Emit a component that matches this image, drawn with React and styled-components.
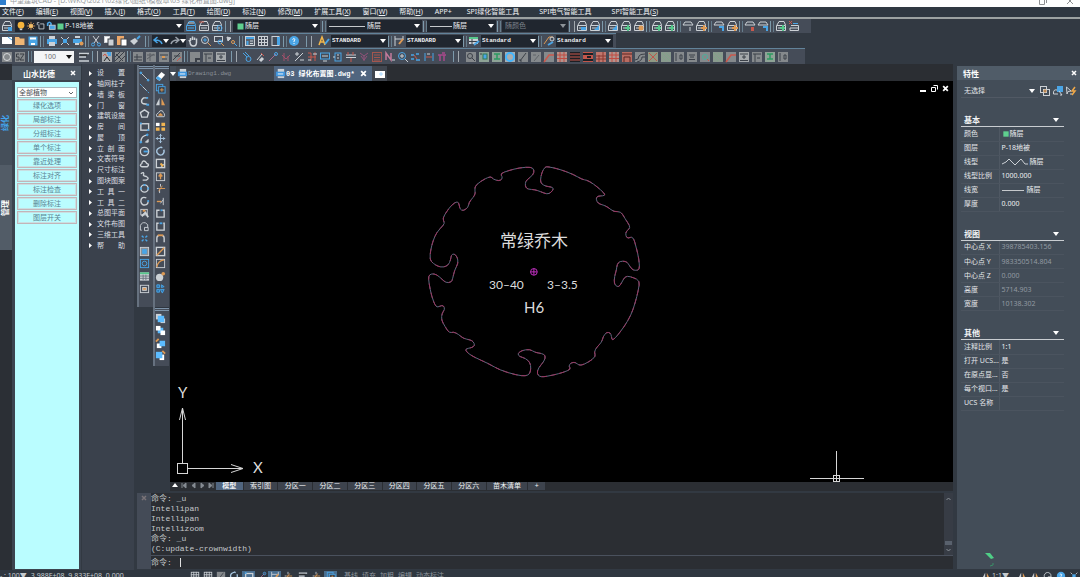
import React from 'react';
import styled, { createGlobalStyle, css } from 'styled-components';

const sans = '"Noto Sans", "Noto Sans CJK SC", sans-serif';
const mono = '"Liberation Mono", "Noto Sans CJK SC", monospace';

const W = '#ccd1d6';
const B = '#4aa5e6';
const O = '#dd9a55';
const G = '#57c78c';
const R = '#c9584c';
const D = '#3b4048';

const Global = createGlobalStyle`
  * { box-sizing: border-box; }
  html, body { margin: 0; background: #323942; }
  body { font-family: ${sans}; font-size: 7px; color: #e3e6e9; overflow: hidden; }
  button, input, select { font: inherit; color: inherit; margin: 0; padding: 0; border: 0; background: none; border-radius: 0; }
  button { cursor: pointer; }
`;

const Shell = styled.div`
  display: flex;
  flex-direction: column;
  height: 100vh;
  background: #323942;
  overflow: hidden;
  white-space: nowrap;
`;

/* ---------- icons ---------- */

const Svg = styled.svg`
  display: block;
  flex: none;
  fill: none;
  stroke: ${W};
  stroke-width: 1;
`;

const layers = (
  <>
    <path d="M2 5 L4 1.5 H9 L10.5 5" />
    <path d="M1.5 5.5 H10.5 V10.5 H1.5 Z M3 8 H9" />
  </>
);

const tile = (inner, fill = '#85898c') => (
  <>
    <rect x="1" y="1" width="10" height="10" fill={fill} stroke="none" />
    <g stroke={D}>{inner}</g>
  </>
);

const icons = {
  layerMgr: <>{layers}<rect x="7" y="7" width="4" height="4" fill={B} stroke="none" /></>,
  layerPrev: <><g stroke={B}>{layers}</g><path d="M3 3 H9" /></>,
  layerState: <>{layers}<path d="M1 2 H6" stroke={R} /></>,
  layerWalk: <>{layers}<circle cx="8.5" cy="8" r="2.5" stroke={B} /></>,
  layerBlue: <>{layers}<path d="M5 7 H10 V10 H5 Z" fill={B} stroke="none" /></>,
  layerPick: <>{layers}<path d="M5 10 L10 5 L10 10 Z" fill={B} stroke="none" /></>,
  layerOrange: <>{layers}<circle cx="8" cy="8" r="2.5" fill={O} stroke="none" /></>,
  layerGreen: <>{layers}<path d="M5 8 H10 M8 5 V11" stroke={G} strokeWidth="2" /></>,
  layerSun: <>{layers}<path d="M9 5 V11 M6 8 H12" stroke={O} strokeWidth="2" /></>,
  layerTop: <path d="M1 5 L3 2 H9 L11 5 Z M8 7 V11" />,
  layerRed: <><path d="M1 5 L3 2 H9 L11 5 Z" /><rect x="7" y="7" width="3" height="4" fill={R} stroke="none" /></>,
  layerCyan: <><path d="M1 5 L3 2 H9 L11 5 Z" /><path d="M6 7 H10 V11" stroke={B} strokeWidth="2" /></>,
  layerCross: <><path d="M3 5.5 H10.5 V10.5 H2 V8 H10" /><path d="M1 1 L4 4 M4 1 L1 4" stroke={R} /><path d="M5 3.5 H10" stroke={B} /></>,
  bulb: <><circle cx="6" cy="5" r="4" fill="#f3b23c" stroke="none" /><path d="M4.5 10 H7.5" strokeWidth="2" /></>,
  sun: <><path d="M6 1 V11 M1 6 H11 M2.5 2.5 L9.5 9.5 M9.5 2.5 L2.5 9.5" stroke={O} /><circle cx="6" cy="6" r="2.5" fill="#f3c06a" stroke="none" /></>,
  freeze: <path d="M3.5 4 V9.5 H9.5 V3.5 H5 M1.5 5 V2 H4" />,
  lock: <><path d="M2 6 V3 Q4 0 6 3 V6" stroke={B} strokeWidth="2" /><rect x="4" y="5" width="7" height="5" stroke={W} fill={B} /></>,
  green: <rect x="2" y="2" width="8" height="8" fill="#5fcf8f" stroke="none" />,
  newDoc: <><rect x="1" y="2" width="10" height="7" fill="#fff" stroke="none" /><path d="M7 2 L11 5" stroke={B} /></>,
  open: <path d="M1 2 H5 L6 3.5 H10.5 V10 H1 Z" fill="#efb675" stroke="none" />,
  save: <><rect x="1.5" y="1.5" width="9" height="9" fill={B} stroke="none" /><path d="M3 3.5 H9 M4 9 H8" stroke="#fff" strokeWidth="2" /></>,
  print: <><rect x="1" y="4" width="10" height="5" fill={B} stroke="none" /><rect x="3" y="1" width="6" height="3" fill={W} stroke="none" /><rect x="3" y="7" width="6" height="4" fill={W} stroke="none" /></>,
  preview: <><path d="M2 2 L4 4 M10 2 L8 4 M2 10 L4 8 M10 10 L8 8" /><rect x="4" y="4" width="4" height="4" fill={B} stroke="none" /></>,
  publish: <><rect x="1" y="4" width="9" height="4" fill={B} stroke="none" /><path d="M3 2 H8 M3 9 H7" strokeWidth="2" /><circle cx="9.5" cy="8.5" r="2" fill={O} stroke="none" /></>,
  cut: <><path d="M3 1 L8 8 M9 1 L4 8" /><circle cx="3" cy="9.5" r="1.5" stroke={B} /><circle cx="9" cy="9.5" r="1.5" stroke={B} /></>,
  copy: <><rect x="1.5" y="1.5" width="5" height="6" fill="#fff" /><rect x="5" y="4" width="6" height="7" fill={W} stroke={D} /></>,
  paste: <><rect x="1" y="1" width="7" height="9" fill="#eda869" stroke="none" /><rect x="5" y="4" width="6" height="7" fill="#fff" stroke={D} /></>,
  brush: <><path d="M1 6 L6 3 L9 6 L5 10 Z" fill={W} stroke="none" /><path d="M8 4 L11 1" stroke={B} strokeWidth="2" /></>,
  undo: <path d="M10 9 Q9 5 3 5 M5.5 2 L2 5 L5.5 8" stroke={B} strokeWidth="1.500" />,
  redo: <path d="M2 9 Q3 5 9 5 M6.5 2 L10 5 L6.5 8" stroke="#9ba2ab" strokeWidth="1.500" />,
  hand: <path d="M3 7 L2 5 M3.5 6 V3 M5.5 5 V1.5 M7.5 5 V2.5 M9.5 6 V3.5 M3 6.5 Q3 11 6.5 11 Q10 11 9.5 6" strokeWidth="1.500" />,
  zoomRt: <><circle cx="5" cy="5" r="3.5" /><path d="M8 8 L11 11" stroke={O} /><path d="M5 3 V7 M3 5 H7" stroke={B} /></>,
  zoomWin: <><rect x="1.5" y="1.5" width="8" height="5" /><circle cx="7" cy="7" r="2" stroke={B} /><path d="M8 8 L11 11" stroke={O} /></>,
  zoomPrev: <><path d="M1 2 L5 3 L2 6 Z" fill={W} /><circle cx="7" cy="7" r="1.5" stroke={O} /><path d="M8 8 L11 11" stroke={B} /></>,
  props: <><rect x="1.5" y="1.5" width="9" height="9" fill="#59636e" /><path d="M2 3 H10 M3.5 6 V10" stroke={B} strokeWidth="2" /><path d="M6 6 H9 M6 8.5 H9" /></>,
  grid: <><rect x="1.5" y="1.5" width="9" height="9" /><path d="M1 4.5 H11 M1 7.5 H11 M4.5 1 V11 M7.5 1 V11" /></>,
  toolPal: <><rect x="2" y="1.5" width="7" height="9" /><rect x="7" y="2" width="3" height="8" fill={B} stroke="none" /></>,
  help: <><circle cx="6" cy="6" r="5" fill={B} stroke="none" /><path d="M4.5 4.5 Q6 2.5 7 4.5 L6 6 V7 M6 8 V9" stroke="#fff" /></>,
  textStyle: <><path d="M1 10 L4 2 L7 10 M2.5 7 H6" stroke="#f3b74a" strokeWidth="1.500" /><path d="M7 9 L11 4" stroke={B} strokeWidth="2" /></>,
  dimStyle: <><path d="M2 1 V11 M2 4 H10 M10 1 V5" /><path d="M6 9 L10 4" stroke={O} strokeWidth="2" /></>,
  tableStyle: <><rect x="1" y="2" width="9" height="7" fill={W} stroke="none" /><path d="M1 3 H10" stroke={G} strokeWidth="2" /><path d="M1 6.5 H10 M4 4 V9" stroke={D} /><path d="M6 10 L11 6" stroke={B} strokeWidth="2" /></>,
  mlStyle: <><path d="M1 9 L6 2 H10" stroke={O} /><circle cx="9" cy="4" r="2" /><path d="M5 10 L10 7" stroke={B} strokeWidth="2" /></>,
  /* draw tools */
  line: <><path d="M2 2 L10 10" /><circle cx="2" cy="2" r="1" fill={B} stroke={B} /><circle cx="10" cy="10" r="1" fill={B} stroke={B} /></>,
  xline: <><path d="M1 1 L11 11" strokeDasharray="3 1" stroke={B} /><path d="M4 4 L8 8" /></>,
  pline: <><path d="M9 2 H5 Q2 4 3 7 Q4 9 9 9" strokeWidth="1.500" /><path d="M8 2 H10 M8 9.5 H11" stroke={B} strokeWidth="2" /></>,
  polygon: <path d="M6 2 L10.5 5 L9 10 H3 L1.5 5 Z" strokeWidth="1.500" />,
  rect: <><rect x="2" y="3" width="8.5" height="7" strokeWidth="1.500" /><path d="M1 2.5 H3 M9 10 H11" stroke={B} strokeWidth="2" /></>,
  arc: <><path d="M2 10 Q2 3 9 2" strokeWidth="1.500" /><circle cx="2" cy="10" r="1" fill={B} stroke={B} /><circle cx="9" cy="2" r="1" fill={B} stroke={B} /><path d="M10 7 V10 H7 Z" fill={W} /></>,
  circle: <><circle cx="6" cy="6" r="4.5" strokeWidth="1.500" /><path d="M5 6 H10" stroke={B} strokeWidth="2" /></>,
  cloud: <path d="M3 9.5 Q0 8 3 6 Q4 2 7 4 Q8 5 8.5 6 Q12 7 9 9.5 Z" strokeWidth="1.500" />,
  spline: <path d="M2 3 Q6 0 5 4 Q4 5 8 6 Q12 8 8 10 H4" strokeWidth="1.500" />,
  ellipse: <><circle cx="6" cy="6" r="4" strokeWidth="1.500" /><path d="M1 6 H3 M9 6 H11 M5 2 H7" stroke={B} strokeWidth="2" /></>,
  ellArc: <><path d="M8 2 Q2 0 2 6 Q3 11 8 9.5 Q10 8 10 6" strokeWidth="1.500" /><path d="M9 5.5 H11" stroke={B} strokeWidth="2" /></>,
  insert: <><rect x="2" y="1.5" width="7" height="6" /><path d="M3 9 L7 5 L10 10" stroke={W} strokeWidth="2" /><path d="M4 3 H7" stroke={O} strokeWidth="2" /></>,
  block: <path d="M3 10 H1.5 V5 Q3 1 7 2 L9.5 4 V7 M6 7 H10 V10.5 H6 Z" />,
  point: <path d="M3 3 L5 5 M9 3 L7 5 M3 9 L5 7 M9 9 L7 7" stroke={B} strokeWidth="1.500" />,
  hatch: <><rect x="1.5" y="1.5" width="9" height="9" fill="#8a9198" /><rect x="4" y="4" width="4" height="4" fill={B} stroke={B} /></>,
  region: <><rect x="1.5" y="1.5" width="9" height="9" stroke={B} /><circle cx="6" cy="6" r="2.5" stroke={B} /></>,
  table: <><rect x="1" y="1.5" width="10" height="9" fill={W} stroke="none" /><path d="M1 2.5 H11" stroke={G} strokeWidth="2" /><path d="M1 5.5 H11 M1 8 H11 M4.5 4 V10 M7.5 4 V10" stroke="#6b7580" /></>,
  image: <><rect x="1.5" y="2.5" width="9" height="8" /><rect x="4" y="5" width="4" height="3" fill={O} stroke={W} /></>,
  /* modify tools */
  erase: <><path d="M1 8 L7 1 L11 4 L5 11 Z" fill="#fff" stroke="none" /><path d="M1 8 L3 5.5 L7 8.5 L5 11 Z" fill={B} stroke="none" /></>,
  dup: <><rect x="1.5" y="1.5" width="7" height="7" stroke={B} /><rect x="4" y="4" width="7" height="7" stroke={B} fill={D} /><path d="M7.5 5.5 V9.500 M5.5 7.5 H9.500" stroke={O} /></>,
  mirror: <><path d="M5 2 V10 H1 Z" fill={W} stroke="none" /><path d="M7 2 V10 H11 Z" fill={O} stroke="none" /></>,
  offset: <><path d="M2 9.5 Q0 7 4 5 Q5 2 8 3 Q9 5 10 6 Q11 8 10 9.5 Z" /><path d="M4 8 Q6 4 8 8 Z" stroke={O} fill={O} /></>,
  array: <><rect x="1" y="2" width="4" height="3.5" fill="#fff" stroke="none" /><path d="M7 2 H11 V5.5 H7 Z M1 7 H5 V10.5 H1 Z M7 7 H11 V10.5 H7 Z" fill="#f0b452" stroke="none" /></>,
  move: <path d="M6 1 V11 M1 6 H11 M4.5 3 L6 1.5 L7.5 3 M4.5 9 L6 10.5 L7.5 9 M3 4.5 L1.5 6 L3 7.5 M9 4.5 L10.5 6 L9 7.5" stroke="#a9c8e2" />,
  rotate: <path d="M6 1.5 Q1 3 2 7 Q4 11 8 9.5 Q11 7 9.5 4 M6 1 L8 2" stroke="#a9c8e2" strokeWidth="1.500" />,
  scale: <><rect x="1.5" y="1.5" width="9" height="9" strokeWidth="1.500" /><path d="M10 7 H7 V10" /><path d="M6 6 L9 9" stroke="#f0b452" strokeWidth="2" /></>,
  stretch: <><rect x="1.5" y="2" width="9" height="8.5" /><path d="M6 9 V4 M4 6 L6 3.5 L8 6" stroke={O} strokeWidth="1.500" /></>,
  trim: <><path d="M6 1 V4 M5 11 V7 M2 6 H4" /><path d="M4 6 H11 M4 9 L8 3" stroke={O} /></>,
  extend: <><path d="M2 6 H7" stroke={O} strokeWidth="1.500" /><path d="M9 2 V10 M6 8 L9 4" /></>,
  breakPt: <><path d="M5 2.5 H2 V10 H10 V2.5 H8" strokeWidth="1.500" /><path d="M6 2.5 H8" stroke={B} strokeWidth="2" /></>,
  brk: <><path d="M4 2.5 H2 V10 H10 V2.5 H9" strokeWidth="1.500" /><path d="M5 2.5 H8" stroke={B} strokeWidth="2" /></>,
  join: <><path d="M2 10 V6 Q2 3 4 3 M10 10 V6 Q10 3 8 3" strokeWidth="1.500" /><path d="M3 2.5 H9" stroke={O} strokeWidth="2" /></>,
  chamfer: <><rect x="1.5" y="1.5" width="9" height="9" strokeWidth="1.500" /><path d="M2 10 L10 2" stroke={O} strokeWidth="1.500" /></>,
  fillet: <><rect x="1.5" y="1.5" width="9" height="9" /><path d="M2 10 Q3 3 10 2" stroke={O} strokeWidth="1.500" /></>,
  explode: <><circle cx="5" cy="7" r="4" fill={W} stroke="none" /><circle cx="9" cy="3" r="2" fill={O} stroke="none" /></>,
  group: <path d="M2 2 H5 V5 H2 Z M7 2 L10 4 L7 5 Z M2 7 H5 V10 H2 Z M6 7 H10 L8 11 Z" stroke={B} fill="#2b72ad" />,
  front: <><rect x="1" y="1" width="6" height="6" fill={W} stroke="none" /><rect x="6" y="6" width="5" height="5" fill={W} stroke="none" /><rect x="3" y="3" width="7" height="7" fill="#5cbcff" stroke="none" /></>,
  back: <><rect x="3" y="3" width="6" height="6" fill="#5cbcff" stroke="none" /><rect x="1" y="1" width="5" height="5" fill="#fff" stroke="none" /><rect x="6" y="6" width="5" height="5" fill="#fff" stroke="none" /></>,
  above: <><rect x="2" y="6" width="5" height="5" fill="#fff" stroke="none" /><rect x="5" y="3" width="6" height="6" fill="#5cbcff" stroke="none" /><path d="M1 4 L4 1" stroke={O} strokeWidth="2" /></>,
  under: <><rect x="5" y="5" width="5" height="6" fill="#fff" stroke="none" /><rect x="1" y="2" width="7" height="7" fill="#5cbcff" stroke="none" /><path d="M8 1 L11 4" stroke={O} strokeWidth="2" /></>,
  /* properties panel */
  pickAdd: <><rect x="1.5" y="1.5" width="6" height="6" /><rect x="4.5" y="4.5" width="6" height="6" /><path d="M6 4 V8 M4 6 H8" stroke={O} /></>,
  pickObj: <><rect x="5" y="1" width="6" height="6" fill={B} stroke="none" /><path d="M5 5 Q1 4 1.5 9 H6 M7 6 L10 10 L8 10" /></>,
  quick: <><path d="M1.5 2 L6 6 L3 6.5 L2 9 Z M5 9 H7" /><path d="M10 2 L7 6 H10 L7 10" stroke="#f0a848" strokeWidth="1.500" /></>,
  dwg: <><rect x="3" y="1" width="7" height="4" fill={W} stroke="none" /><rect x="1" y="4" width="10" height="5" fill="#3f95dd" stroke="none" /><path d="M3 6.5 H9" stroke="#fff" /><path d="M3 10 H10" strokeWidth="2" /></>,
  newTab: <><rect x="1" y="3" width="10" height="7" fill="#fff" stroke="none" /><path d="M7 4 V8 M5 6 H9" stroke="#a8d8ff" /></>,
  /* small coloured CAD tools */
  c0: <><path d="M2 2 L6 6 M4 1 L8 5" stroke={B} /><circle cx="7.5" cy="8" r="2.5" stroke={B} /></>,
  c1: <><path d="M3 9 L8 3" /><path d="M7 2 L10 5" stroke={R} /><path d="M6 10 L9 7" strokeWidth="3" /></>,
  c2: <><path d="M2 10 L9 3" stroke="#a86a8b" /><circle cx="9" cy="3" r="1.5" stroke={B} /></>,
  c3: <path d="M2 4 L6 8 L10 4 M4 2 V10 M8 5 V10" stroke="#a0506a" />,
  c4: <><path d="M2 3 H6 M4 1 V5 M7 9 H11" /><path d="M2 10 L10 2" /></>,
  c5: <><path d="M2 2 H5 V10 M9 1 V10 M2 6 H10" stroke={R} /><path d="M7 3 H11 M2 9 H5" /></>,
  c6: <><rect x="1.5" y="2" width="9" height="6" stroke={B} /><path d="M3 5 H9 M4 10 H8" /></>,
  c7: <><rect x="3" y="2" width="6" height="8" stroke={B} /><path d="M5 4 H7 M5 7 H7 M1 6 H3" /></>,
  c8: <><path d="M1 4 H11 M1 6.5 H11" /><path d="M3 1 V4 M8 1 V4 M6 7 V11" stroke={R} /></>,
  c9: <path d="M2 2 L6 5 L10 2 M3 5 L6 9 L9 5 M6 5 V10" stroke="#94527a" />,
  c10: <><rect x="1.5" y="1.5" width="9" height="9" stroke="#a3564e" /><path d="M3 4 H9 M3 6.5 H9 M3 9 H9" stroke="#a3564e" /></>,
  c11: <><path d="M2 9 V2 L7 9 V2" stroke="#c27a9a" strokeWidth="1.500" /><path d="M8 9 H11" /></>,
  c12: <><circle cx="5" cy="5" r="3.5" stroke={B} /><path d="M5 3 V7 M3 5 H7 M8 8 L11 11" /></>,
  c13: <><path d="M1 4 H4 M6 3 H9 M1 8 H4 M6 9 H10" stroke={B} strokeWidth="1.500" /><path d="M4 4 L7 8" stroke={R} /></>,
  c14: <><path d="M2 2 V10 M10 2 V10" stroke={B} /><path d="M3 6 H9" stroke={R} /><path d="M4 3 H7" /></>,
  c15: <path d="M2 4 H10 M4 4 V10 M8 4 V10 M6 2 H9" stroke="#a84a8c" strokeWidth="1.500" />,
  /* grey tiles */
  t0: tile(<circle cx="6" cy="6" r="3.5" stroke="#d8dadc" />),
  t1: tile(<path d="M5 3 H2.5 V6 H5 V9 H2 M6 3 H10 L6 9 H10" stroke="#3a3f45" />),
  t2: <><path d="M1 2.5 H11 M1 6 H8 M1 10 H11" strokeWidth="1.500" /><path d="M2 4 H9" stroke="#222" /></>,
  t3: tile(<><path d="M6 2 H10 M7 4 H10" stroke={B} strokeWidth="2" /><path d="M2 5 L4 3 L6 6" stroke={R} /><path d="M3 10 L6 6 L9 10" stroke="#222" /></>, '#a9adb0'),
  t4: tile(<path d="M1 6 L6 1 M1 10 L10 1 M5 11 L11 5 M2 3 L9 10" />),
  t5: tile(<path d="M2 6 H10 M5 3 V9 M2 9 H10" />),
  t6: tile(<path d="M2 8 L9 3 M2 4 H10 M5 2 V10" stroke="#5a5f64" />),
  t7: tile(<><path d="M2 4 H10 M4 8 H9" /><path d="M4 6 H7" stroke={O} strokeWidth="2" /></>),
  t8: tile(<><path d="M2 9 L9 2 M3 5 H9" /><path d="M6 10 L10 6" stroke={R} /></>),
  t9: tile(<path d="M7 11 V8 H11" strokeWidth="2" />),
  t10: tile(<path d="M2 3 H10 M4 3 V11 M6 7 H9" />),
  t11: tile(<path d="M2 3 H10 M6 4 V8 M2 9.5 H10 M4 6 H8" />, '#a5a9ac'),
  u0: tile(<><circle cx="5" cy="5" r="2.5" /><path d="M7 7 L10 10" /></>),
  u1: tile(<><rect x="5" y="3" width="4" height="5" fill={B} stroke="#2d7a54" /><path d="M2 3 H4" /></>, '#8ea396'),
  u2: tile(<path d="M3 3 H9 M6 3 V8 M3 8 H9" stroke="#2c9a62" strokeWidth="1.500" />, '#8ea396'),
  u3: tile(<circle cx="6" cy="6" r="4" stroke="#43b6ff" strokeWidth="2" />, '#a9adb0'),
  u4: tile(<path d="M3 10 L9 2 M3 8 V10 H5" />),
  u5: tile(<path d="M4 10 L9 4 M3 4 H6" stroke="#60656a" />),
  u6: tile(<path d="M1 11 L6 4 H11" stroke={R} strokeWidth="1.500" />),
  u7: tile(<path d="M1 4 H11 M1 7.5 H11 M4 1 V11 M8 1 V11" stroke="#c14c43" />, '#b3938d'),
  u8: tile(<path d="M1 3 H11 M1 6 H11 M1 9 H11" stroke={R} />, '#1d1f24'),
  u9: tile(<path d="M1 3 H11 M5 6 H9 M1 9 H11" stroke="#1d1f24" strokeWidth="2" />, '#c1564c'),
  u10: tile(<path d="M1 5 H11 M4 4 V11 M8 1 V11 M1 8 H11" stroke="#8a3831" />, '#c0766d'),
  u11: tile(<path d="M3 11 V6 H9 V11 M1 3 H11" stroke="#5a2622" />, '#b96c62'),
  u12: tile(<path d="M1 9 Q5 9 5 5 Q6 3 11 3 M3 11 Q8 10 8 6 H11" />),
  u13: tile(<path d="M2 2 L10 10 M10 2 L2 10" stroke="#c0564b" />, '#8f9a84'),
  u14: tile(<path d="M2 2 L10 10 M2 6 L6 10 M6 2 L10 6" stroke="#7fa388" />, '#8a9a8e'),
  u15: tile(<path d="M3 2 V10 M7 4 H9 V8 H7 Z" />),
  u16: tile(<path d="M3 4 H9 M4 6 H8 M3 8.5 H9" />),
  u17: tile(<><circle cx="6" cy="6" r="2.5" stroke="#4cae9c" /><path d="M8 8 L10 10" stroke={R} /></>),
};

const Icon = ({ name, size = 12 }) => (
  <Svg width={size} height={size} viewBox="0 0 12 12" aria-hidden="true">{icons[name]}</Svg>
);

const Caret = ({ color = '#fff' }) => (
  <Svg width="6" height="4" viewBox="0 0 6 4" aria-hidden="true">
    <path d="M0 0 H6 L3 4 Z" fill={color} stroke="none" />
  </Svg>
);

/* ---------- title and menu ---------- */

const TitleBar = styled.header`
  display: flex;
  justify-content: space-between;
  align-items: flex-end;
  height: 7px;
  flex: none;
  background: #fdfefe;
  color: #9a9d9f;
  padding: 0 5px 2px 0;
  overflow: hidden;
`;
const TitleText = styled.div`
  display: flex;
  align-items: flex-end;
  gap: 4px;
  line-height: 9px;
`;
const AppMark = styled.span`
  width: 6px;
  height: 7px;
  background: #2f7fce;
`;
const WinButtons = styled.div`
  display: flex;
  gap: 18px;
`;
const WinButton = styled.button`
  width: 9px;
  height: 8px;
`;
const MenuBar = styled.nav`
  display: flex;
  gap: 12px;
  height: 12px;
  flex: none;
  padding-left: 2px;
  background: #2e3741;
  border-bottom: 2px solid #9ba1a2;
`;
const PluginMenus = styled.div`
  display: flex;
  gap: 20px;
  padding-left: 3px;
`;
const MenuItem = styled.button`
  color: #eef1f3;
  text-align: left;
  line-height: 10px;
  u { text-underline-offset: 1px; }
`;

const menus = [
  ['文件', 'F'], ['编辑', 'E'], ['视图', 'V'], ['插入', 'I'], ['格式', 'O'], ['工具', 'T'], ['绘图', 'D'],
  ['标注', 'N'], ['修改', 'M'], ['扩展工具', 'X'], ['窗口', 'W'], ['帮助', 'H'], ['APP+'],
];
const pluginMenus = [['SPI绿化智能工具'], ['SPI电气智能工具'], ['SPI智能工具', 'S']];

const MenuItems = ({ items }) => items.map(([text, key]) => (
  <MenuItem key={text} type="button">{text}{key && <>(<u>{key}</u>)</>}</MenuItem>
));

/* ---------- toolbars ---------- */

const BarRow = styled.div`
  display: flex;
  flex: none;
`;
const Bar = styled.div`
  display: flex;
  align-items: center;
  height: ${(p) => p.$h}px;
  padding-right: ${(p) => p.$end}px;
  background: #454c58;
  border-top: ${(p) => (p.$line ? '1px solid #62839a' : '0')};
`;
const ToolButton = styled.button`
  display: flex;
  justify-content: center;
  align-items: center;
  width: 13px;
  height: 13px;
  flex: none;
`;
const Grip = styled.span`
  display: flex;
  justify-content: center;
  width: ${(p) => p.$w}px;
  height: 11px;
  flex: none;
  &::before {
    content: '';
    width: ${(p) => (p.$double ? 4 : 2)}px;
    border-left: 1px solid #7d9aab;
    border-right: 1px solid ${(p) => (p.$double ? '#a2a8ae' : '#667d8c')};
  }
`;
const Combo = styled.label`
  display: flex;
  align-items: center;
  width: ${(p) => p.$w}px;
  height: 12px;
  flex: none;
  padding: 0 2px 0 ${(p) => p.$pad || 1}px;
  margin-left: ${(p) => p.$ml || 0}px;
  margin-right: ${(p) => p.$mr || 0}px;
  background: ${(p) => (p.$light ? '#f4f5f6' : '#20262f')};
  color: ${(p) => (p.$light ? '#6c7074' : p.$dim ? '#7c828a' : '#eef0f2')};
  ${(p) => p.$mono && css`font-family: ${mono}; font-size: 6px; font-weight: bold;`}
`;
const Select = styled.select`
  appearance: none;
  flex: 1;
  min-width: 0;
  outline: 0;
  line-height: 10px;
  padding-left: ${(p) => p.$pad || 0}px;
`;
const LineSample = styled.span`
  width: ${(p) => p.$w}px;
  height: 1px;
  background: #c6c9cc;
  flex: none;
`;
const UndoGroup = styled.div`
  display: flex;
  align-items: center;
  width: 34px;
  height: 12px;
  background: #20262f;
  button { width: 11px; }
`;

const Tools = ({ names }) => names.map((n, i) => (
  <ToolButton key={i} type="button" aria-label={n}><Icon name={n} /></ToolButton>
));

const Drop = ({ value, caret, label, children, selPad, ...rest }) => (
  <Combo {...rest}>
    {children}
    <Select aria-label={label} defaultValue={value} $pad={selPad}><option>{value}</option></Select>
    <Caret color={caret} />
  </Combo>
);

const LayerRow = () => (
  <BarRow>
    <Bar $h={14} $end={11}>
      <Tools names={['layerMgr']} />
      <Drop $w={169} $ml={2} $pad={1} value="P-18地被" label="图层">
        <Icon name="bulb" size={10} /><Icon name="sun" size={10} /><Icon name="freeze" size={10} />
        <Icon name="lock" size={10} /><Icon name="green" size={9} />
      </Drop>
      <Tools names={['layerPrev', 'layerState', 'layerWalk']} />
      <Grip $w={10} $double />
      <Drop $w={87} $pad={3} value="随层" label="颜色"><Icon name="green" size={9} /></Drop>
      <Grip $w={7} />
      <Drop $w={95} $pad={2} selPad={2} value="随层" label="线型"><LineSample $w={36} /></Drop>
      <Grip $w={5} />
      <Drop $w={69} $pad={3} selPad={1} value="随层" label="线宽"><LineSample $w={22} /></Drop>
      <Grip $w={6} />
      <Drop $w={66} $pad={3} $dim caret="#8d9399" value="随颜色" label="打印样式" />
      <Grip $w={7} $double />
      <Tools names={['layerBlue', 'layerPick']} />
      <Grip $w={5} />
      <Tools names={['layerPick', 'layerGreen', 'layerOrange']} />
      <Grip $w={5} />
      <Tools names={['layerGreen', 'layerGreen']} />
      <Grip $w={5} />
      <Tools names={['layerTop', 'layerSun']} />
      <Grip $w={5} />
      <Tools names={['layerCyan', 'layerSun']} />
      <Grip $w={5} />
      <Tools names={['layerRed', 'layerCyan']} />
      <Grip $w={5} />
      <Tools names={['layerGreen', 'layerCross']} />
    </Bar>
  </BarRow>
);

const StandardRow = () => (
  <BarRow>
    <Bar $h={15} $end={3} $line>
      <Tools names={['newDoc', 'open', 'save']} />
      <Grip $w={6} />
      <Tools names={['print', 'preview', 'publish']} />
      <Grip $w={5} />
      <Tools names={['cut', 'copy', 'paste', 'brush']} />
      <Grip $w={11} />
      <UndoGroup>
        <Tools names={['undo']} /><Caret /><Tools names={['redo']} /><Caret />
      </UndoGroup>
      <Tools names={['hand', 'zoomRt', 'zoomWin', 'zoomPrev']} />
      <Grip $w={5} />
      <Tools names={['props', 'grid', 'toolPal']} />
      <Grip $w={5} />
      <Tools names={['help']} />
      <Grip $w={17} $double />
      <Tools names={['textStyle']} />
      <Drop $w={57} $ml={1} $mono value="STANDARD" label="文字样式" />
      <Grip $w={4} />
      <Tools names={['dimStyle']} />
      <Drop $w={57} $ml={1} $mono value="STANDARD" label="标注样式" />
      <Grip $w={4} />
      <Tools names={['tableStyle']} />
      <Drop $w={57} $ml={1} $mono value="Standard" label="表格样式" />
      <Grip $w={4} />
      <Tools names={['mlStyle']} />
      <Drop $w={57} $ml={1} $mono value="Standard" label="引线样式" />
    </Bar>
  </BarRow>
);

const archTools = Array.from({ length: 16 }, (_, i) => `c${i}`);
const planTools = ['u0', 'u1', 'u2', 'u3', 'u4', 'u5', 'u6', 'u7', 'u8', 'u9', 'u10', 'u7', 'u11', 'u12', 'u13',
  'u14', 'u15', 'u16', 'u17', 'u14', 'u6', 't11', 't10', 'u2', 'u15'];

const PluginRow = () => (
  <BarRow>
    <Bar $h={16} $end={16} $line>
      <Tools names={['t0', 't1']} />
      <Grip $w={8} />
      <Drop $w={40} $mr={3} $light caret="#111" selPad={9} value="100" label="比例" />
      <Tools names={['t2']} />
      <Grip $w={10} $double />
      <Tools names={['t3', 't4']} />
      <Grip $w={5} />
      <Tools names={['t5', 't6', 't7', 't8']} />
      <Grip $w={5} />
      <Tools names={['t9', 't10', 't11']} />
      <Grip $w={13} $double />
      <Tools names={archTools} />
      <Grip $w={16} $double />
      <Tools names={planTools} />
    </Bar>
  </BarRow>
);

/* ---------- left side ---------- */

const Workspace = styled.main`
  display: flex;
  flex: 1;
  min-height: 0;
`;
const Rail = styled.nav`
  display: flex;
  flex-direction: column;
  width: 12px;
  flex: none;
  padding-top: 16px;
  background: #2b2f35;
`;
const RailTab = styled.button`
  display: flex;
  align-items: center;
  justify-content: center;
  height: 85px;
  width: 12px;
  padding-right: 2px;
  background: ${(p) => (p.$active ? '#525c67' : '#454f5a')};
  color: ${(p) => (p.$active ? '#fff' : '#42a4ee')};
  font-size: 8px;
  font-weight: bold;
  span {
    writing-mode: vertical-rl;
    text-orientation: sideways;
    rotate: 180deg;
    line-height: 10px;
  }
`;
const Palette = styled.section`
  display: flex;
  flex-direction: column;
  width: 69px;
  flex: none;
  padding: 2px 0 1px;
  margin-right: 1px;
  background: #3c444f;
`;
const PanelHead = styled.div`
  display: flex;
  align-items: center;
  justify-content: space-between;
  height: 14px;
  flex: none;
  padding: 0 ${(p) => p.$right}px 0 ${(p) => p.$left}px;
  background: #505c68;
  color: #fff;
  font-size: 8px;
  font-weight: bold;
`;
const CloseButton = styled.button`
  display: flex;
  align-items: center;
  justify-content: center;
  width: 8px;
  height: 8px;
`;
const Cross = ({ color = '#fff', size = 6 }) => (
  <Svg width={size} height={size} viewBox="0 0 6 6" aria-hidden="true">
    <path d="M1 1 L5 5 M5 1 L1 5" stroke={color} strokeWidth="1.500" />
  </Svg>
);
const PlantList = styled.div`
  display: flex;
  flex-direction: column;
  gap: 1px;
  flex: 1;
  margin: 2px 2px 0 3px;
  padding: 5px 2px 0;
  background: #bafdff;
  color: #5a8292;
`;
const PlantSelect = styled.label`
  display: flex;
  align-items: center;
  height: 11px;
  padding: 0 2px 0 1px;
  background: #fff;
  border: 1px solid #a9b9be;
  color: #4a4f53;
`;
const PlantButton = styled.button`
  height: 13px;
  line-height: 9px;
  border: 1px solid #c2b5b9;
  outline: 1px solid #c9dfe2;
  outline-offset: -2px;
  background: #bafdff;
`;
const TreePane = styled.aside`
  width: 52px;
  flex: none;
  padding-top: 4px;
  margin-right: 3px;
  background: #3a414c;
`;
const Tree = styled.ul`
  display: grid;
  grid-auto-rows: 1fr;
  height: 183px;
  list-style: none;
  margin: 0;
  padding: 0;
`;
const TreeItem = styled.button`
  display: flex;
  align-items: center;
  gap: 5px;
  height: 100%;
  padding-left: 7px;
  line-height: 10px;
  color: #dcdfe2;
  span {
    width: 28px;
    text-align: justify;
    text-align-last: justify;
  }
`;

const plants = ['绿化选项', '局部标注', '分组标注', '单个标注', '靠近处理', '标注对齐', '标注检查', '删除标注', '图层开关'];
const treeItems = ['设 置', '轴网柱子', '墙 梁 板', '门 窗', '建筑设施', '房 间', '屋 顶', '立 剖 面', '文表符号',
  '尺寸标注', '图块图案', '工 具 一', '工 具 二', '总图平面', '文件布图', '三维工具', '帮 助'];

/* ---------- centre ---------- */

const Center = styled.div`
  display: flex;
  flex-direction: column;
  flex: 1;
  min-width: 0;
`;
const Upper = styled.div`
  display: flex;
  flex: 1;
  min-height: 0;
`;
const ToolColumn = styled.div`
  width: 16px;
  padding-top: 1px;
  flex: none;
`;
const ToolStrip = styled.div`
  display: grid;
  grid-auto-rows: 1fr;
  justify-items: start;
  height: ${(p) => p.$h}px;
  padding: 5px 0 ${(p) => p.$bottom}px;
  background: #454c58;
  border-left: 2px solid #66717f;
  box-shadow: inset 0 1px #2f3640, inset 0 2px #7d93a8, inset 0 3px #454c58, inset 0 4px #7d93a8;
`;
const StripButton = styled.button`
  display: flex;
  align-items: center;
  justify-content: center;
  width: 11px;
`;
const Drawing = styled.div`
  display: flex;
  flex-direction: column;
  flex: 1;
  min-width: 0;
  margin-left: 1px;
`;
const FileTabs = styled.div`
  display: flex;
  height: 17px;
  flex: none;
  padding-top: 2px;
  background: #2b2e33;
`;
const TabMenu = styled.button`
  display: flex;
  align-items: center;
  justify-content: center;
  width: 6px;
  background: #454d58;
`;
const FileTab = styled.button`
  display: flex;
  align-items: center;
  width: 98px;
  padding-left: 1px;
  font-family: ${mono};
  font-size: ${(p) => (p.$active ? 7 : 6)}px;
  font-weight: ${(p) => (p.$active ? 'bold' : 'normal')};
  background: ${(p) => (p.$active ? '#50657f' : '#40464f')};
  color: ${(p) => (p.$active ? '#fff' : '#8a9098')};
`;
const TabName = styled.span`
  flex: 1;
  text-align: left;
  line-height: 10px;
`;
const TabClose = styled.span`
  display: flex;
  padding-right: 5px;
`;
const NewTab = styled.button`
  display: flex;
  align-items: center;
  justify-content: center;
  width: 15px;
  background: #40464f;
`;
const Canvas = styled.div`
  position: relative;
  flex: 1;
  min-height: 0;
  background: #000;
  overflow: hidden;
`;
const DocButtons = styled.div`
  position: absolute;
  top: 3px;
  right: 4px;
  display: flex;
  gap: 3px;
`;
const Sketch = styled.svg`
  display: block;
  width: 100%;
  height: 100%;
  fill: none;
  stroke: #d6d6d6;
  text {
    fill: #dcdcdc;
    stroke: none;
    font-family: Lato, "Noto Sans CJK SC", sans-serif;
  }
`;

const crown = [
  [335, 36], [343, 45], [340, 60], [320, 75], [316, 85], [317, 97], [325, 103], [345, 104], [362, 110], [382, 118],
  [393, 113], [402, 101], [395, 96], [378, 94], [365, 87], [361, 76], [366, 52], [375, 36], [385, 35], [420, 43],
  [460, 58], [488, 74], [500, 75], [520, 86], [543, 105], [557, 119], [550, 123], [533, 123], [528, 132], [535, 146],
  [550, 150], [565, 157], [582, 171], [603, 169], [615, 190], [631, 214], [628, 222], [618, 231], [618, 243],
  [624, 251], [640, 244], [650, 280], [657, 310], [660, 344], [648, 347], [636, 344], [625, 325], [617, 319],
  [600, 319], [592, 328], [590, 345], [584, 365], [583, 387], [592, 396], [601, 393], [612, 370], [622, 363],
  [640, 368], [660, 377], [656, 405], [646, 445], [634, 480], [612, 518], [578, 560], [575, 545], [572, 534],
  [560, 532], [550, 545], [546, 562], [530, 578], [523, 592], [528, 605], [508, 621], [480, 634], [467, 622],
  [453, 624], [446, 634], [454, 643], [430, 653], [400, 661], [362, 668], [351, 657], [355, 640], [374, 618],
  [377, 602], [366, 596], [345, 593], [330, 583], [305, 587], [293, 597], [298, 605], [318, 611], [331, 624],
  [333, 640], [330, 657], [318, 664], [290, 661], [240, 646], [205, 626], [160, 606], [140, 592], [136, 582],
  [155, 579], [165, 572], [160, 560], [150, 555], [130, 551], [115, 538], [100, 531], [88, 535], [75, 515],
  [64, 495], [66, 475], [75, 463], [70, 451], [60, 454], [48, 458], [35, 425], [27, 385], [25, 363], [35, 356],
  [50, 359], [65, 372], [78, 384], [94, 382], [98, 372], [104, 345], [115, 325], [112, 306], [102, 296], [94, 300],
  [92, 315], [85, 331], [70, 337], [55, 335], [40, 326], [29, 314], [32, 285], [39, 258], [50, 232], [72, 209],
  [73, 202], [68, 190], [80, 170], [95, 150], [113, 138], [118, 150], [120, 163], [130, 168], [145, 157],
  [147, 142], [160, 127], [167, 115], [163, 96], [180, 80], [212, 63], [220, 73], [237, 78], [246, 73], [247, 65],
  [241, 56], [265, 47], [300, 38],
];
const smooth = (pts) => {
  const mid = (a, b) => [(a[0] + b[0]) / 2, (a[1] + b[1]) / 2];
  const start = mid(pts[pts.length - 1], pts[0]);
  return `M${start.join(' ')} ` + pts.map((p, i) => {
    const m = mid(p, pts[(i + 1) % pts.length]);
    return `Q${p.join(' ')} ${m.join(' ')}`;
  }).join(' ') + ' Z';
};
const crownPath = smooth(crown);

const Plan = () => (
  <Sketch>
    <g transform="translate(250 74) scale(0.333)" strokeWidth="3">
      <path d={crownPath} stroke="#5d6880" />
      <path d={crownPath} stroke="#9c355f" strokeDasharray="17 10" />
      <g stroke="#c02fc0">
        <circle cx="342" cy="351" r="10" />
        <path d="M342 341 V361 M332 351 H352" />
      </g>
    </g>
    <text x="330" y="166" fontSize="17">常绿乔木</text>
    <text x="319" y="208" fontSize="12">30–40</text>
    <text x="377" y="208" fontSize="12">3–3.5</text>
    <text x="354" y="232" fontSize="15">H6</text>
    <g>
      <path d="M12.5 382 V327 M9.5 339 L12.5 327 L15.5 339 M18 387.5 H73 M61 383.5 L73 387.5 L61 391.5" />
      <rect x="7.5" y="382.5" width="10" height="10" />
      <text x="8" y="317" fontSize="15">Y</text>
      <text x="83" y="392" fontSize="15">X</text>
    </g>
    <path d="M666.5 370 V401 M640 397.5 H694" />
    <rect x="663.5" y="394.5" width="6" height="6" />
  </Sketch>
);

const SheetTabs = styled.div`
  display: flex;
  align-items: flex-start;
  height: 9px;
  flex: none;
  background: #2b2e33;
`;
const SheetNav = styled.div`
  display: flex;
  justify-content: space-around;
  width: 46px;
  flex: none;
`;
const NavButton = styled.button`
  display: flex;
  width: 8px;
  height: 7px;
  align-items: center;
  justify-content: center;
`;
const SheetList = styled.div`
  display: flex;
  gap: 1px;
  width: 329px;
`;
const SheetTab = styled.button`
  flex: 1 0 auto;
  padding: 0 6px;
  height: 8px;
  line-height: 8px;
  background: ${(p) => (p.$active ? '#516680' : '#3d434d')};
  color: #f0f2f4;
  font-weight: ${(p) => (p.$active ? 'bold' : 'normal')};
`;
const sheets = ['模型', '索引图', '分区一', '分区二', '分区三', '分区四', '分区五', '分区六', '苗木清单', '+'];

const Command = styled.section`
  display: flex;
  height: 76px;
  flex: none;
  margin: 2px 0 1px;
  background: #2b2e33;
  font-family: ${mono};
  font-size: 8px;
  color: #c4c7ca;
`;
const CommandSide = styled.div`
  width: 14px;
  padding: 1px 3px;
  background: #444b57;
`;
const CommandBody = styled.div`
  display: flex;
  flex-direction: column;
  flex: 1;
  min-width: 0;
`;
const History = styled.div`
  display: flex;
  justify-content: space-between;
  height: 63px;
  border-bottom: 1px solid #4a515d;
`;
const Lines = styled.pre`
  margin: 0;
  padding-top: 1px;
  font: inherit;
  line-height: 10px;
`;
const ScrollTrack = styled.div`
  display: flex;
  flex-direction: column;
  justify-content: flex-end;
  align-items: center;
  width: 9px;
  padding: 4px 0 3px;
  background: #373c45;
  i { width: 7px; height: 4px; background: #59616d; margin: auto 0 3px; }
`;
const Prompt = styled.label`
  display: flex;
  align-items: center;
  flex: 1;
  line-height: 10px;
`;
const PromptInput = styled.input`
  flex: 1;
  height: 9px;
  margin-left: 8px;
  border-left: 1px solid #e0e0e0;
  outline: 0;
`;

const history = ['命令: _u', 'Intellipan', 'Intellipan', 'Intellizoom', '命令: _u', '(C:update-crownwidth)'].join('\n');

/* ---------- properties ---------- */

const Properties = styled.aside`
  display: flex;
  flex-direction: column;
  width: 123px;
  flex: none;
  margin: 2px 0 1px 4px;
  background: #434d58;
`;
const Selection = styled.div`
  display: flex;
  align-items: center;
  height: 16px;
  margin: 3px 3px 15px 4px;
`;
const SelectionBox = styled.label`
  display: flex;
  align-items: center;
  flex: 1;
  height: 14px;
  padding: 0 3px;
  border-bottom: 1px solid #515964;
`;
const Section = styled.section`
  margin: 0 16px 16px 4px;
`;
const SectionHead = styled.button`
  display: flex;
  justify-content: space-between;
  align-items: center;
  width: 100%;
  height: 13px;
  padding: 0 5px 0 3px;
  border-bottom: 1px solid #c9cdd1;
  font-size: 8px;
  font-weight: bold;
  line-height: 10px;
  color: #f2f4f5;
`;
const Grid = styled.table`
  width: 100%;
  table-layout: fixed;
  border-collapse: collapse;
`;
const Key = styled.th`
  width: 38px;
  height: 14px;
  padding: 0 0 0 3px;
  border-bottom: 1px solid #4b545f;
  border-right: 1px solid #4f5863;
  font-weight: normal;
  text-align: left;
  line-height: 10px;
`;
const Value = styled.td`
  height: 14px;
  padding: 0 0 0 2px;
  border-bottom: 1px solid #4b545f;
  line-height: 10px;
  color: ${(p) => (p.$dim ? '#9299a1' : '#eceef0')};
`;
const Flow = styled.div`
  display: flex;
  align-items: center;
  gap: ${(p) => p.$gap || 0}px;
`;
const Leaf = styled.div`
  display: flex;
  justify-content: flex-end;
  margin: auto 83px 1px 0;
`;

const sections = [
  ['基本', false, [
    ['颜色', <Flow><Icon name="green" size={8} />随层</Flow>],
    ['图层', 'P-18地被'],
    ['线型', <Flow $gap={2}><Svg width="26" height="8" viewBox="0 0 26 8"><path d="M0 6 L4 4 L7 1 L13 7 L19 1 L23 6 H26" /></Svg>随层</Flow>],
    ['线型比例', '1000.000'],
    ['线宽', <Flow $gap={3}><LineSample $w={22} />随层</Flow>],
    ['厚度', '0.000'],
  ]],
  ['视图', true, [
    ['中心点 X', '398785403.156'], ['中心点 Y', '983350514.804'], ['中心点 Z', '0.000'],
    ['高度', '5714.903'], ['宽度', '10138.302'],
  ]],
  ['其他', false, [
    ['注释比例', '1:1'], ['打开 UCS...', '是'], ['在原点显...', '否'], ['每个视口...', '是'], ['UCS 名称', ''],
  ]],
];

/* ---------- status bar ---------- */

const Status = styled.footer`
  display: flex;
  height: 7px;
  flex: none;
  overflow: hidden;
  padding-top: 1px;
  background: #2f3740;
  line-height: 10px;
  color: #c5cace;
`;
const StatusText = styled.div`
  display: flex;
  width: 188px;
  gap: 4px;
  flex: none;
`;
const StatusIcon = styled.button`
  display: flex;
  justify-content: center;
  align-items: flex-start;
  width: 13px;
  height: 11px;
  margin-left: ${(p) => p.$ml || 0}px;
  background: ${(p) => (p.$on ? '#4a6f90' : 'none')};
`;
const StatusWords = styled.div`
  display: flex;
  gap: 4px;
  padding-left: 7px;
  color: #8e959c;
  flex: 1;
`;
const StatusRight = styled.div`
  display: flex;
  align-items: flex-start;
`;

export default function App() {
  return (
    <Shell>
      <Global />
      <TitleBar>
        <TitleText>
          <AppMark />
          <span>中望建筑CAD - [D:\WKQ\2021\02绿化\图纸\模板章\03 绿化布置图.dwg]</span>
        </TitleText>
        <WinButtons>
          <WinButton type="button" aria-label="还原">
            <Svg width="8" height="8" viewBox="0 0 8 8"><path d="M0.5 2 H5.5 V7.5 H0.5 Z M2 0.5 H7.5 V6" stroke="#8d9092" /></Svg>
          </WinButton>
          <WinButton type="button" aria-label="关闭">
            <Svg width="8" height="8" viewBox="0 0 8 8"><path d="M1 1 L7 7 M7 1 L1 7" stroke="#8d9092" /></Svg>
          </WinButton>
        </WinButtons>
      </TitleBar>
      <MenuBar>
        <MenuItems items={menus} />
        <PluginMenus><MenuItems items={pluginMenus} /></PluginMenus>
      </MenuBar>
      <LayerRow />
      <StandardRow />
      <PluginRow />
      <Workspace>
        <Rail>
          <RailTab type="button"><span>绿化</span></RailTab>
          <RailTab type="button" $active><span>管理</span></RailTab>
        </Rail>
        <Palette>
          <PanelHead $left={11} $right={4}>
            山水比德
            <CloseButton type="button" aria-label="关闭面板"><Cross /></CloseButton>
          </PanelHead>
          <PlantList>
            <PlantSelect>
              <Select aria-label="植物" defaultValue="全部植物"><option>全部植物</option></Select>
              <Svg width="6" height="4" viewBox="0 0 6 4"><path d="M1 1 L3 3 L5 1" stroke="#63696d" /></Svg>
            </PlantSelect>
            {plants.map((p) => <PlantButton key={p} type="button">{p}</PlantButton>)}
          </PlantList>
        </Palette>
        <TreePane>
          <Tree>
            {treeItems.map((t) => (
              <li key={t}>
                <TreeItem type="button">
                  <Svg width="3" height="5" viewBox="0 0 3 5"><path d="M0 0 V5 L3 2.5 Z" fill="#fff" stroke="none" /></Svg>
                  <span>{t}</span>
                </TreeItem>
              </li>
            ))}
          </Tree>
        </TreePane>
        <Center>
          <Upper>
            <ToolColumn>
              <ToolStrip $h={242} $bottom={12}>
                {['line', 'xline', 'pline', 'polygon', 'rect', 'arc', 'circle', 'cloud', 'spline', 'ellipse', 'ellArc',
                  'insert', 'block', 'point', 'hatch', 'region', 'table', 'image'].map((n) => (
                  <StripButton key={n} type="button" aria-label={n}><Icon name={n} size={11} /></StripButton>
                ))}
              </ToolStrip>
            </ToolColumn>
            <ToolColumn>
              <ToolStrip $h={242} $bottom={12}>
                {['erase', 'dup', 'mirror', 'offset', 'array', 'move', 'rotate', 'scale', 'stretch', 'trim', 'extend',
                  'breakPt', 'brk', 'join', 'chamfer', 'fillet', 'explode', 'group'].map((n) => (
                  <StripButton key={n} type="button" aria-label={n}><Icon name={n} size={11} /></StripButton>
                ))}
              </ToolStrip>
              <ToolStrip $h={59} $bottom={4}>
                {['front', 'back', 'above', 'under'].map((n) => (
                  <StripButton key={n} type="button" aria-label={n}><Icon name={n} size={11} /></StripButton>
                ))}
              </ToolStrip>
            </ToolColumn>
            <Drawing>
              <FileTabs>
                <TabMenu type="button" aria-label="文件列表"><Caret /></TabMenu>
                <FileTab type="button"><Icon name="dwg" size={11} /><TabName>Drawing1.dwg</TabName></FileTab>
                <FileTab type="button" $active>
                  <Icon name="dwg" size={11} /><TabName>03 绿化布置图.dwg*</TabName><TabClose><Cross size={7} /></TabClose>
                </FileTab>
                <NewTab type="button" aria-label="新建"><Icon name="newTab" size={12} /></NewTab>
              </FileTabs>
              <Canvas>
                <Plan />
                <DocButtons>
                  <CloseButton type="button" aria-label="最小化">
                    <Svg width="6" height="7" viewBox="0 0 6 7"><path d="M0 6 H6" stroke="#fff" strokeWidth="2" /></Svg>
                  </CloseButton>
                  <CloseButton type="button" aria-label="还原">
                    <Svg width="7" height="7" viewBox="0 0 7 7"><path d="M0.5 2.5 H4.5 V6.5 H0.5 Z M2.5 0.5 H6.5 V4.5" stroke="#fff" /></Svg>
                  </CloseButton>
                  <CloseButton type="button" aria-label="关闭"><Cross size={7} /></CloseButton>
                </DocButtons>
              </Canvas>
              <SheetTabs>
                <SheetNav>
                  {['M0 5 L3 1 L6 5 Z', 'M1 1 V6 M5 1 V6 L2 3.5 Z', 'M5 1 V6 L2 3.5 Z', 'M2 1 V6 L5 3.5 Z', 'M5 1 V6 M1 1 V6 L4 3.5 Z'].map((d, i) => (
                    <NavButton key={d} type="button" aria-label="翻页">
                      <Svg width="6" height="7" viewBox="0 0 6 7"><path d={d} fill={i ? '#858b92' : '#fff'} stroke={i ? '#858b92' : 'none'} /></Svg>
                    </NavButton>
                  ))}
                </SheetNav>
                <SheetList>
                  {sheets.map((s, i) => <SheetTab key={s} type="button" $active={i === 0}>{s}</SheetTab>)}
                </SheetList>
              </SheetTabs>
            </Drawing>
          </Upper>
          <Command>
            <CommandSide>
              <CloseButton type="button" aria-label="关闭命令行"><Cross color="#7a7478" /></CloseButton>
            </CommandSide>
            <CommandBody>
              <History>
                <Lines>{history}</Lines>
                <ScrollTrack>
                  <Svg width="5" height="4" viewBox="0 0 5 4"><path d="M0.5 3 L2.5 1 L4.5 3" stroke="#8a9097" /></Svg>
                  <i />
                  <Svg width="5" height="4" viewBox="0 0 5 4"><path d="M0.5 1 L2.5 3 L4.5 1" stroke="#8a9097" /></Svg>
                </ScrollTrack>
              </History>
              <Prompt>命令:<PromptInput type="text" /></Prompt>
            </CommandBody>
          </Command>
        </Center>
        <Properties>
          <PanelHead $left={6} $right={2}>
            特性
            <CloseButton type="button" aria-label="关闭特性"><Cross /></CloseButton>
          </PanelHead>
          <Selection>
            <SelectionBox>
              <Select aria-label="选择" defaultValue="无选择"><option>无选择</option></Select>
              <Caret />
            </SelectionBox>
            <Tools names={['pickAdd', 'pickObj', 'quick']} />
          </Selection>
          {sections.map(([title, dim, rows]) => (
            <Section key={title}>
              <SectionHead type="button">{title}<Caret /></SectionHead>
              <Grid>
                <tbody>
                  {rows.map(([k, v]) => (
                    <tr key={k}><Key scope="row">{k}</Key><Value $dim={dim}>{v}</Value></tr>
                  ))}
                </tbody>
              </Grid>
            </Section>
          ))}
          <Leaf>
            <Svg width="12" height="16" viewBox="0 0 12 16">
              <path d="M0 1 L5 1 L9 6 L6 7 L3 4 Z" fill="#4fce86" stroke="none" />
              <path d="M8 11 V13 L5 14" stroke="#3a8f66" />
            </Svg>
          </Leaf>
        </Properties>
      </Workspace>
      <Status>
        <StatusText><span>- : 100▼</span><span>3.988E+08, 9.833E+08, 0.000</span></StatusText>
        <StatusIcon type="button" aria-label="捕捉"><Icon name="grid" size={10} /></StatusIcon>
        <StatusIcon type="button" aria-label="栅格"><Icon name="grid" size={10} /></StatusIcon>
        <StatusIcon type="button" aria-label="正交"><Icon name="u4" size={10} /></StatusIcon>
        <StatusIcon type="button" aria-label="极轴"><Icon name="rotate" size={10} /></StatusIcon>
        <StatusIcon type="button" $on $ml={2} aria-label="对象捕捉"><Icon name="rect" size={10} /></StatusIcon>
        <StatusIcon type="button" aria-label="追踪"><Icon name="c2" size={10} /></StatusIcon>
        <StatusIcon type="button" $on aria-label="动态输入"><Icon name="dimStyle" size={10} /></StatusIcon>
        <StatusIcon type="button" aria-label="线宽"><Icon name="trim" size={10} /></StatusIcon>
        <StatusIcon type="button" $ml={2} aria-label="透明度"><Icon name="t2" size={10} /></StatusIcon>
        <StatusIcon type="button" aria-label="循环选择"><Icon name="trim" size={10} /></StatusIcon>
        <StatusIcon type="button" $on $ml={2} aria-label="模型"><Icon name="dup" size={10} /></StatusIcon>
        <StatusWords>
          <span>基线</span><span>填充</span><span>加粗</span><span>编辑</span><span>动态标注</span>
        </StatusWords>
        <StatusRight>
          <StatusIcon type="button" aria-label="注释比例"><Icon name="mirror" size={10} /></StatusIcon>
          <span>1:1▼</span>
          <StatusIcon type="button" $ml={6} aria-label="注释可见性"><Icon name="mirror" size={10} /></StatusIcon>
          <StatusIcon type="button" aria-label="自动添加"><Icon name="mirror" size={10} /></StatusIcon>
          <StatusIcon type="button" aria-label="切换空间"><Icon name="block" size={10} /></StatusIcon>
          <StatusIcon type="button" aria-label="设置"><Icon name="help" size={10} /></StatusIcon>
          <StatusIcon type="button" aria-label="全屏"><Icon name="preview" size={10} /></StatusIcon>
        </StatusRight>
      </Status>
    </Shell>
  );
}
